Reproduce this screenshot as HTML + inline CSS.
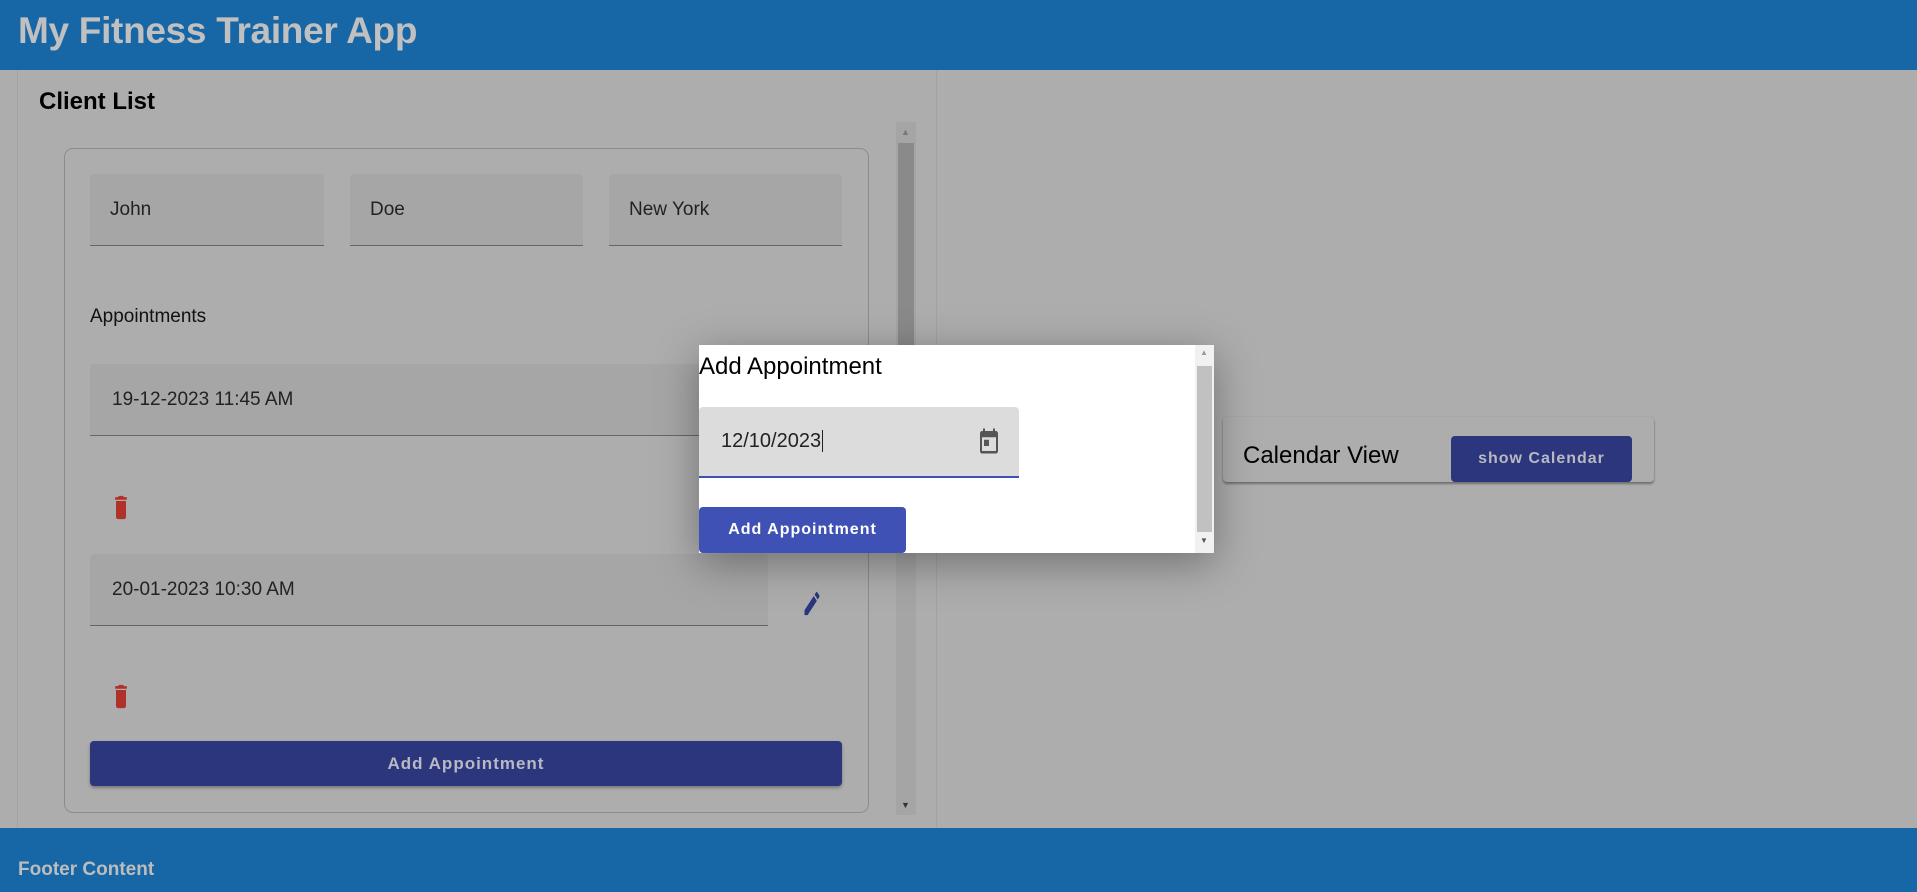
<!DOCTYPE html>
<html><head><meta charset="utf-8"><style>
*{box-sizing:border-box;margin:0;padding:0}
body{width:1917px;height:892px;overflow:hidden;background:#adadad;font-family:"Liberation Sans",Roboto,sans-serif;position:relative;color:#111}
.abs{position:absolute}
.hdr{left:0;top:0;width:1917px;height:70px;background:#1766a6}
.hdr span{position:absolute;left:18px;top:10px;font-size:37px;font-weight:bold;color:#c0c0c0;letter-spacing:-0.3px}
.ftr{left:0;top:828px;width:1917px;height:64px;background:#1766a6}
.ftr span{position:absolute;left:18px;top:31px;font-size:19px;font-weight:bold;color:#bdbdbd}
.panel{left:17px;top:70px;width:920px;height:758px;border-left:1px solid #a2a2a2;border-right:1px solid #a2a2a2}
.inp{background:#a6a6a6;border-bottom:1px solid #666;border-radius:4px 4px 0 0;font-size:19px;color:#222;padding-left:20px;display:flex;align-items:center}
.btn{border-radius:4px;font-weight:bold;letter-spacing:1px;display:flex;align-items:center;justify-content:center}
</style></head><body>
<div class="abs hdr"><span>My Fitness Trainer App</span></div>
<div class="abs panel"></div>
<div class="abs" style="left:39px;top:88px;font-size:24px;font-weight:bold;color:#000">Client List</div>
<div class="abs" style="left:896px;top:122px;width:20px;height:693px;background:#a5a5a5"></div>
<div class="abs" style="left:898px;top:143px;width:16px;height:330px;background:#8a8a8a"></div>
<div class="abs" style="left:901px;top:127px;font-size:9px;color:#777">▲</div>
<div class="abs" style="left:901px;top:800px;font-size:9px;color:#333">▼</div>
<div class="abs" style="left:64px;top:148px;width:805px;height:665px;border:1px solid #8c8c8c;border-radius:9px"></div>
<div class="abs inp" style="left:90px;top:174px;width:234px;height:72px">John</div>
<div class="abs inp" style="left:350px;top:174px;width:233px;height:72px">Doe</div>
<div class="abs inp" style="left:609px;top:174px;width:233px;height:72px">New York</div>
<div class="abs" style="left:90px;top:306px;font-size:19px;color:#111">Appointments</div>
<div class="abs inp" style="left:90px;top:364px;width:678px;height:72px;padding-left:22px">19-12-2023 11:45 AM</div>
<div class="abs inp" style="left:90px;top:554px;width:678px;height:72px;padding-left:22px">20-01-2023 10:30 AM</div>
<svg class="abs" style="left:111px;top:492px" width="20" height="31" viewBox="0 0 24 24" preserveAspectRatio="none"><path fill="#b0302a" d="M6 19c0 1.1.9 2 2 2h8c1.1 0 2-.9 2-2V7H6v12zM19 4h-3.5l-1-1h-5l-1 1H5v2h14V4z"/></svg>
<svg class="abs" style="left:111px;top:681px" width="20" height="31" viewBox="0 0 24 24" preserveAspectRatio="none"><path fill="#b0302a" d="M6 19c0 1.1.9 2 2 2h8c1.1 0 2-.9 2-2V7H6v12zM19 4h-3.5l-1-1h-5l-1 1H5v2h14V4z"/></svg>
<svg class="abs" style="left:802px;top:588px" width="20" height="31" viewBox="0 0 24 24" preserveAspectRatio="none"><path fill="#2b3680" d="M3 17.25V21h3.75L17.81 9.94l-3.75-3.75L3 17.25zM20.71 7.04a1 1 0 000-1.41l-2.34-2.34a1 1 0 00-1.41 0l-1.83 1.83 3.75 3.75 1.83-1.83z"/></svg>
<div class="abs btn" style="left:90px;top:741px;width:752px;height:45px;background:#2b367c;color:#b9b9c4;font-size:17px;box-shadow:0 2px 3px rgba(0,0,0,.3)">Add Appointment</div>
<div class="abs" style="left:1223px;top:417px;width:431px;height:65px;background:#adadad;border-radius:4px;box-shadow:0 2px 2px rgba(0,0,0,.35),0 0 1px rgba(0,0,0,.2)"></div>
<div class="abs" style="left:1243px;top:442px;font-size:24px;color:#000">Calendar View</div>
<div class="abs btn" style="left:1451px;top:436px;width:181px;height:46px;background:#2b367c;color:#b9b9c4;font-size:16px">show Calendar</div>
<div class="abs" style="left:699px;top:345px;width:515px;height:208px;background:#fff;box-shadow:0 10px 40px rgba(0,0,0,.35)">
  <div class="abs" style="left:0;top:8px;font-size:24px;color:#000">Add Appointment</div>
  <div class="abs" style="left:496px;top:0;width:19px;height:208px;background:#f1f1f1"></div>
  <div class="abs" style="left:498px;top:21px;width:15px;height:166px;background:#c1c1c1"></div>
  <div class="abs" style="left:501px;top:3px;font-size:8px;color:#999">▲</div>
  <div class="abs" style="left:501px;top:191px;font-size:8px;color:#555">▼</div>
  <div class="abs" style="left:0;top:62px;width:320px;height:71px;background:#dcdcdc;border-bottom:2px solid #3f51b5;border-radius:4px 4px 0 0">
    <span class="abs" style="left:22px;top:23px;font-size:20px;color:#222">12/10/2023<span style="border-left:1px solid #222;margin-left:1px"></span></span>
    <svg class="abs" style="left:278px;top:19px" width="24" height="30" viewBox="0 0 24 24" preserveAspectRatio="none"><path fill="#555" d="M19 4h-1V2h-2v2H8V2H6v2H5c-1.1 0-2 .9-2 2v14c0 1.1.9 2 2 2h14c1.1 0 2-.9 2-2V6c0-1.1-.9-2-2-2zm0 16H5V9h14v11zM7 11h5v5H7z"/></svg>
  </div>
  <div class="abs btn" style="left:0;top:162px;width:207px;height:46px;background:#3f51b5;color:#fff;font-size:16px">Add Appointment</div>
</div>
<div class="abs ftr"><span>Footer Content</span></div>
</body></html>
